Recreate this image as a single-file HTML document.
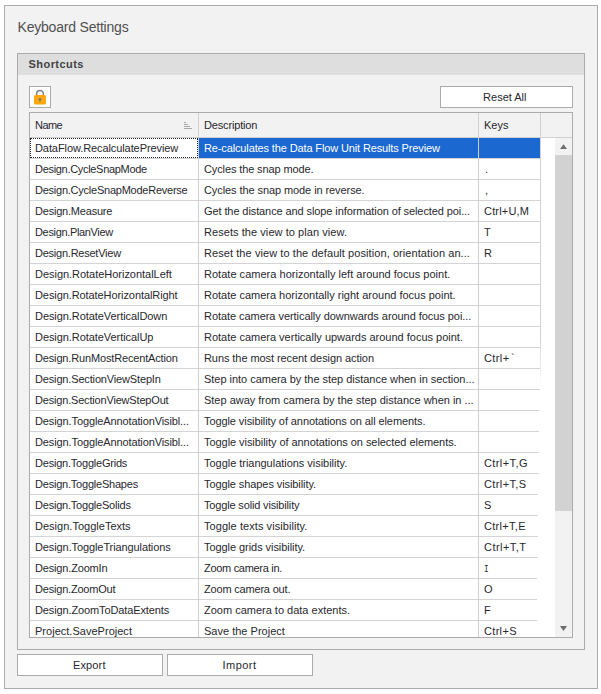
<!DOCTYPE html>
<html><head><meta charset="utf-8"><title>Keyboard Settings</title>
<style>
html,body{margin:0;padding:0;background:#fff;}
body{width:601px;height:694px;position:relative;overflow:hidden;font-family:"Liberation Sans",sans-serif;font-size:11px;color:#28282e;}
.abs{position:absolute;box-sizing:border-box;}
#panel{left:4px;top:5px;width:594px;height:684px;border:1px solid #ababab;background:#f2f2f2;}
#title{left:17.5px;top:16px;font-size:14px;line-height:22px;color:#505050;white-space:nowrap;letter-spacing:-0.2px;}
#group{left:17px;top:53px;width:568px;height:597px;border:1px solid #ababab;background:#f2f2f2;}
#ghead{left:18px;top:54px;width:566px;height:21px;background:#dedede;}
#gtitle{left:28.5px;top:54px;line-height:20px;font-weight:bold;color:#444;letter-spacing:0.45px;white-space:nowrap;}
.btn{background:#fff;border:1px solid #ababab;text-align:center;line-height:20px;white-space:nowrap;}
#lock{left:29px;top:86px;width:22px;height:22px;}
#reset{left:440px;top:86px;width:133px;height:22px;padding-right:3.4px;}
#export{left:17px;top:654px;width:146px;height:22px;padding-right:1.5px;letter-spacing:0.15px;}
#import{left:167px;top:654px;width:146px;height:22px;padding-right:1px;letter-spacing:0.5px;}
#grid{left:29px;top:112px;width:544px;height:526px;border:1px solid #ababab;background:#fff;overflow:hidden;}
#hdr{left:0;top:0;width:542px;height:24px;background:#f2f2f2;}
#hline{left:0;top:24px;width:542px;height:1px;background:#d0d0d0;}
.hc{top:0;height:24px;line-height:24px;white-space:nowrap;}
.vl{width:1px;background:#d0d0d0;}
.row{left:0;width:542px;height:21px;}
.row .c{position:absolute;top:0;height:20px;line-height:20px;white-space:nowrap;overflow:hidden;}
.row .n{left:5px;width:160px;}
.row .d{left:174px;width:272px;}
.row .k{left:454px;width:56px;}
.row .hl{position:absolute;left:0;top:20px;height:1px;background:#d4d4d4;}
#sel{left:169px;top:25px;width:341px;height:20px;background:#1a68d0;}
#focus{left:0;top:25px;width:168px;height:20px;border:1px dotted #222;}
#sb{left:525px;top:25px;width:17px;height:499px;background:#f2f2f2;}
#thumb{left:525px;top:42px;width:17px;height:356px;background:#d2d2d2;}
</style></head><body>
<div id="panel" class="abs"></div>
<div id="title" class="abs">Keyboard Settings</div>
<div id="group" class="abs"></div>
<div id="ghead" class="abs"></div>
<div id="gtitle" class="abs">Shortcuts</div>
<div id="lock" class="abs btn"><svg width="20" height="20" viewBox="0 0 20 20" style="position:absolute;left:0;top:0"><path d="M6.65 8.6V6.8a3.35 3.35 0 0 1 6.7 0V8.6" fill="none" stroke="#808080" stroke-width="1.5"/><rect x="4" y="8" width="12" height="9.6" rx="1.5" fill="#ffa60c"/><circle cx="10" cy="12.2" r="1.2" fill="#72758a"/><path d="M9.25 12.4h1.5l-.35 2.9h-.8z" fill="#72758a" fill-opacity="0.8"/></svg></div>
<div id="reset" class="abs btn">Reset All</div>
<div id="grid" class="abs">
<div id="hdr" class="abs"></div>
<div class="abs hc" style="left:5px;letter-spacing:-0.55px">Name</div>
<div class="abs hc" style="left:174px;letter-spacing:-0.16px">Description</div>
<div class="abs hc" style="left:454px">Keys</div>
<svg class="abs" style="left:154px;top:9px" width="8" height="8" viewBox="0 0 8 8"><path d="M0 .5h2M0 2.5h4M0 4.5h6M0 6.5h8" stroke="#a8a8a8" stroke-width="1" fill="none"/></svg>
<div id="hline" class="abs"></div>
<div class="abs row s" style="top:25px"><div class="c n" style="letter-spacing:-0.087px">DataFlow.RecalculatePreview</div><div class="c d" style="letter-spacing:-0.132px">Re-calculates the Data Flow Unit Results Preview</div><div class="c k"></div><div class="hl" style="width:510px"></div></div>
<div class="abs row" style="top:46px"><div class="c n" style="letter-spacing:-0.308px">Design.CycleSnapMode</div><div class="c d" style="letter-spacing:-0.120px">Cycles the snap mode.</div><div class="c k"><span style="margin-left:1px">.</span></div><div class="hl" style="width:510px"></div></div>
<div class="abs row" style="top:67px"><div class="c n" style="letter-spacing:-0.241px">Design.CycleSnapModeReverse</div><div class="c d" style="letter-spacing:-0.084px">Cycles the snap mode in reverse.</div><div class="c k"><span style="margin-left:1px">,</span></div><div class="hl" style="width:510px"></div></div>
<div class="abs row" style="top:88px"><div class="c n" style="letter-spacing:-0.205px">Design.Measure</div><div class="c d" style="letter-spacing:-0.096px">Get the distance and slope information of selected poi...</div><div class="c k" style="letter-spacing:0.186px">Ctrl+U,M</div><div class="hl" style="width:510px"></div></div>
<div class="abs row" style="top:109px"><div class="c n" style="letter-spacing:-0.340px">Design.PlanView</div><div class="c d" style="letter-spacing:0.061px">Resets the view to plan view.</div><div class="c k">T</div><div class="hl" style="width:510px"></div></div>
<div class="abs row" style="top:130px"><div class="c n" style="letter-spacing:-0.237px">Design.ResetView</div><div class="c d" style="letter-spacing:0.075px">Reset the view to the default position, orientation an...</div><div class="c k">R</div><div class="hl" style="width:510px"></div></div>
<div class="abs row" style="top:151px"><div class="c n" style="letter-spacing:-0.029px">Design.RotateHorizontalLeft</div><div class="c d" style="letter-spacing:0.022px">Rotate camera horizontally left around focus point.</div><div class="c k"></div><div class="hl" style="width:510px"></div></div>
<div class="abs row" style="top:172px"><div class="c n" style="letter-spacing:-0.084px">Design.RotateHorizontalRight</div><div class="c d" style="letter-spacing:-0.006px">Rotate camera horizontally right around focus point.</div><div class="c k"></div><div class="hl" style="width:510px"></div></div>
<div class="abs row" style="top:193px"><div class="c n" style="letter-spacing:-0.065px">Design.RotateVerticalDown</div><div class="c d" style="letter-spacing:-0.055px">Rotate camera vertically downwards around focus poi...</div><div class="c k"></div><div class="hl" style="width:510px"></div></div>
<div class="abs row" style="top:214px"><div class="c n" style="letter-spacing:-0.066px">Design.RotateVerticalUp</div><div class="c d" style="letter-spacing:-0.006px">Rotate camera vertically upwards around focus point.</div><div class="c k"></div><div class="hl" style="width:510px"></div></div>
<div class="abs row" style="top:235px"><div class="c n" style="letter-spacing:-0.154px">Design.RunMostRecentAction</div><div class="c d" style="letter-spacing:-0.073px">Runs the most recent design action</div><div class="c k" style="letter-spacing:0.400px">Ctrl+<span style="margin-left:1.4px">`</span></div><div class="hl" style="width:510px"></div></div>
<div class="abs row" style="top:256px"><div class="c n" style="letter-spacing:-0.155px">Design.SectionViewStepIn</div><div class="c d" style="letter-spacing:-0.029px">Step into camera by the step distance when in section...</div><div class="c k"></div><div class="hl" style="width:510px"></div></div>
<div class="abs row" style="top:277px"><div class="c n" style="letter-spacing:-0.182px">Design.SectionViewStepOut</div><div class="c d" style="letter-spacing:-0.011px">Step away from camera by the step distance when in ...</div><div class="c k"></div><div class="hl" style="width:509px"></div></div>
<div class="abs row" style="top:298px"><div class="c n" style="letter-spacing:-0.115px">Design.ToggleAnnotationVisibl...</div><div class="c d" style="letter-spacing:-0.087px">Toggle visibility of annotations on all elements.</div><div class="c k"></div><div class="hl" style="width:509px"></div></div>
<div class="abs row" style="top:319px"><div class="c n" style="letter-spacing:-0.115px">Design.ToggleAnnotationVisibl...</div><div class="c d" style="letter-spacing:-0.055px">Toggle visibility of annotations on selected elements.</div><div class="c k"></div><div class="hl" style="width:509px"></div></div>
<div class="abs row" style="top:340px"><div class="c n" style="letter-spacing:-0.215px">Design.ToggleGrids</div><div class="c d" style="letter-spacing:-0.028px">Toggle triangulations visibility.</div><div class="c k" style="letter-spacing:0.400px">Ctrl+T,G</div><div class="hl" style="width:509px"></div></div>
<div class="abs row" style="top:361px"><div class="c n" style="letter-spacing:-0.214px">Design.ToggleShapes</div><div class="c d" style="letter-spacing:-0.087px">Toggle shapes visibility.</div><div class="c k" style="letter-spacing:0.386px">Ctrl+T,S</div><div class="hl" style="width:508px"></div></div>
<div class="abs row" style="top:382px"><div class="c n" style="letter-spacing:-0.209px">Design.ToggleSolids</div><div class="c d" style="letter-spacing:-0.159px">Toggle solid visibility</div><div class="c k">S</div><div class="hl" style="width:508px"></div></div>
<div class="abs row" style="top:403px"><div class="c n" style="letter-spacing:0.014px">Design.ToggleTexts</div><div class="c d" style="letter-spacing:0.065px">Toggle texts visibility.</div><div class="c k" style="letter-spacing:0.300px">Ctrl+T,E</div><div class="hl" style="width:508px"></div></div>
<div class="abs row" style="top:424px"><div class="c n" style="letter-spacing:-0.102px">Design.ToggleTriangulations</div><div class="c d" style="letter-spacing:-0.061px">Toggle grids visibility.</div><div class="c k" style="letter-spacing:0.443px">Ctrl+T,T</div><div class="hl" style="width:508px"></div></div>
<div class="abs row" style="top:445px"><div class="c n" style="letter-spacing:-0.163px">Design.ZoomIn</div><div class="c d" style="letter-spacing:-0.300px">Zoom camera in.</div><div class="c k"><span style="font-family:'Liberation Mono',monospace;margin-left:0;display:inline-block;transform:scaleX(0.7);transform-origin:left">I</span></div><div class="hl" style="width:507px"></div></div>
<div class="abs row" style="top:466px"><div class="c n" style="letter-spacing:-0.197px">Design.ZoomOut</div><div class="c d" style="letter-spacing:-0.187px">Zoom camera out.</div><div class="c k">O</div><div class="hl" style="width:507px"></div></div>
<div class="abs row" style="top:487px"><div class="c n" style="letter-spacing:-0.120px">Design.ZoomToDataExtents</div><div class="c d" style="letter-spacing:-0.004px">Zoom camera to data extents.</div><div class="c k">F</div><div class="hl" style="width:507px"></div></div>
<div class="abs row" style="top:508px"><div class="c n" style="letter-spacing:0.019px">Project.SaveProject</div><div class="c d" style="letter-spacing:0.007px">Save the Project</div><div class="c k" style="letter-spacing:0.320px">Ctrl+S</div><div class="hl" style="width:507px"></div></div>
<div id="sel" class="abs"></div>
<div class="abs vl" style="left:168px;top:0;height:524px"></div>
<div class="abs vl" style="left:448px;top:0;height:524px"></div>
<div class="abs vl" style="left:510px;top:0;height:25px"></div>
<div class="abs vl" style="left:510px;top:25px;height:250px;background:linear-gradient(to bottom,#d2d2d2 0,#d2d2d2 200px,#fff 250px)"></div>
<div class="abs" style="left:174px;top:25px;height:20px;line-height:20px;color:#fff;white-space:nowrap;letter-spacing:-0.132px">Re-calculates the Data Flow Unit Results Preview</div>
<div id="focus" class="abs"></div>
<div id="sb" class="abs"></div>
<div id="thumb" class="abs"></div>
<svg class="abs" style="left:525px;top:25px" width="17" height="17" viewBox="0 0 17 17"><path d="M5 10.9L8.5 6.3L12 10.9z" fill="#6e6e6e"/></svg>
<svg class="abs" style="left:525px;top:507px" width="17" height="17" viewBox="0 0 17 17"><path d="M5 6.1L8.5 11L12 6.1z" fill="#6e6e6e"/></svg>
</div>
<div id="export" class="abs btn">Export</div>
<div id="import" class="abs btn">Import</div>
</body></html>
